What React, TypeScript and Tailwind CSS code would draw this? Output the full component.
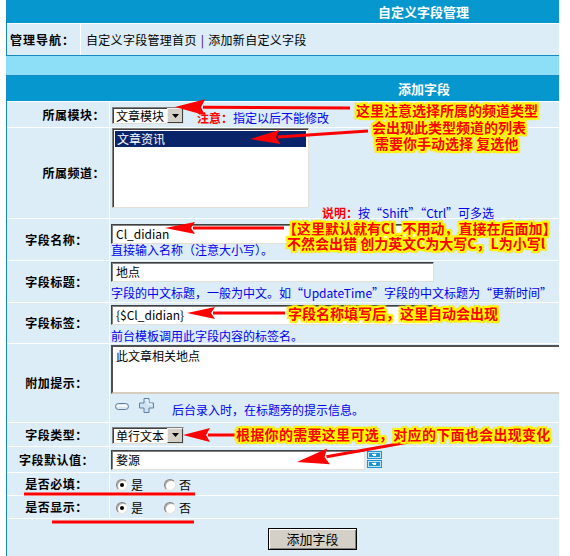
import React from "react";

const GLOW =
  "[text-shadow:1px_0_0_#ff0,-1px_0_0_#ff0,0_1px_0_#ff0,0_-1px_0_#ff0,1px_1px_0_#ff0,-1px_-1px_0_#ff0,1px_-1px_0_#ff0,-1px_1px_0_#ff0,2px_0_1px_#ff0,-2px_0_1px_#ff0,0_2px_1px_#ff0,0_-2px_1px_#ff0,2px_2px_1px_#fd0,-2px_-2px_1px_#fd0,2px_-2px_1px_#fd0,-2px_2px_1px_#fd0]";

function Sel({ text }: { text: string }) {
  return (
    <div className="w-[72px] h-[17px] flex bg-white border border-t-[#808080] border-l-[#808080] border-r-[#e0ddd6] border-b-[#e0ddd6] shadow-[inset_1px_1px_0_#404040]">
      <span className="flex-1 pl-[3px] pt-[1px] leading-[14px] text-[12px] text-black">{text}</span>
      <span className="w-[16px] h-[15px] bg-[#d4d0c8] border border-t-[#f4f2ee] border-l-[#f4f2ee] border-r-[#404040] border-b-[#404040] flex items-center justify-center">
        <svg width="7" height="4" viewBox="0 0 7 4">
          <polygon points="0,0 7,0 3.5,4" fill="#000" />
        </svg>
      </span>
    </div>
  );
}

function Radio({ on }: { on?: boolean }) {
  return (
    <span className="w-[12px] h-[12px] rounded-full bg-white border border-t-[#808080] border-l-[#808080] border-r-[#e6e3dc] border-b-[#e6e3dc] shadow-[inset_1px_1px_0_#b0aca4] flex items-center justify-center">
      {on ? <span className="w-[4px] h-[4px] rounded-full bg-black" /> : null}
    </span>
  );
}

function Label({ children, right }: { children: React.ReactNode; right?: boolean }) {
  return (
    <div
      className={
        right
          ? "w-[102px] shrink-0 bg-[#dcedf8] flex items-center justify-end pr-[4px] font-bold tracking-[0.5px]"
          : "w-[102px] shrink-0 bg-[#dcedf8] flex items-center justify-center pr-[3px] font-bold tracking-[0.5px]"
      }
    >
      {children}
    </div>
  );
}

function arrow(x1: number, y1: number, x2: number, y2: number, len: number, hw: number) {
  const dx = x2 - x1;
  const dy = y2 - y1;
  const L = Math.hypot(dx, dy);
  const ux = dx / L;
  const uy = dy / L;
  const bx = x2 - ux * len;
  const by = y2 - uy * len;
  const px = -uy;
  const py = ux;
  return (
    <g key={`${x1}-${y1}`}>
      <line x1={x1} y1={y1} x2={bx + ux * 2} y2={by + uy * 2} stroke="#f00" strokeWidth="3" />
      <polygon
        points={`${x2},${y2} ${bx + px * hw},${by + py * hw} ${bx + ux * 4},${by + uy * 4} ${bx - px * hw},${by - py * hw}`}
        fill="#f00"
      />
    </g>
  );
}

const INPUT =
  "bg-white border border-t-[#404040] border-l-[#404040] border-r-[#e4e0d8] border-b-[#e4e0d8] shadow-[inset_1px_1px_0_#808080] pl-[4px] text-[12px] leading-[18px] text-black";

export default function App() {
  return (
    <div className="relative w-[570px] h-[556px] overflow-hidden bg-white font-['Noto_Sans_CJK_SC',sans-serif] text-[12px] text-black">
      <div className="ml-[6px] w-[553px]">
        {/* table 1 */}
        <div className="border-l border-[#1589c0] bg-white flex flex-col gap-px">
          <div className="h-[23px] bg-[#0697cf] text-white font-bold text-[13px] leading-[23px] pl-[371px]">
            自定义字段管理
          </div>
          <div className="h-[31px] flex gap-px">
            <div className="w-[73px] bg-[#dcedf8] flex items-center pl-[3px] font-bold tracking-[1px]">管理导航：</div>
            <div className="flex-1 bg-[#dcedf8] flex items-center pl-[5px] tracking-[0.3px]">
              自定义字段管理首页<span className="mx-[4px] text-[#330066]">|</span>添加新自定义字段
            </div>
          </div>
        </div>
        <div className="h-px bg-[#1589c0]" />
        <div className="h-[19px] bg-[#8ddff8]" />
        <div className="h-px bg-[#1589c0]" />

        {/* table 2 */}
        <div className="border-l border-[#1589c0] bg-white flex flex-col gap-px">
          <div className="h-[25px] bg-[#0697cf] text-white font-bold text-[13px] leading-[25px] pl-[391px]">添加字段</div>

          {/* 所属模块 */}
          <div className="h-[25px] flex gap-px">
            <Label right>所属模块：</Label>
            <div className="flex-1 bg-[#dcedf8] flex items-center pl-[2px] pt-[2px]">
              <Sel text="文章模块" />
              <span className="ml-[13px] pt-[4px] text-[#f00] font-bold">注意：</span>
              <span className="pt-[4px] text-[#0000ee]">指定以后不能修改</span>
            </div>
          </div>

          {/* 所属频道 */}
          <div className="h-[90px] flex gap-px">
            <Label right>所属频道：</Label>
            <div className="flex-1 bg-[#dcedf8] flex flex-col pl-[2px]">
              <div className="w-[197px] h-[80px] bg-white border border-t-[#808080] border-l-[#808080] border-r-[#e4e0d8] border-b-[#e4e0d8] shadow-[inset_1px_1px_0_#404040] p-[2px]">
                <div className="h-[16px] bg-[#0a246a] text-white pl-[2px] leading-[16px]">文章资讯</div>
              </div>
              <div className="pl-[210px] leading-[10px] h-[10px] whitespace-nowrap">
                <span className="text-[#f00] font-bold">说明：</span>
                <span className="text-[#0000ee]">按“Shift”“Ctrl”可多选</span>
              </div>
            </div>
          </div>

          {/* 字段名称 */}
          <div className="h-[41px] flex gap-px">
            <Label>字段名称：</Label>
            <div className="flex-1 bg-[#dcedf8] flex flex-col pl-[1px] pt-[5px]">
              <div className={"w-[323px] h-[20px] " + INPUT}>Cl_didian</div>
              <div className="leading-[12px] text-[#0000ee]">直接输入名称（注意大小写）。</div>
            </div>
          </div>

          {/* 字段标题 */}
          <div className="h-[41px] flex gap-px">
            <Label>字段标题：</Label>
            <div className="flex-1 bg-[#dcedf8] flex flex-col pl-[1px] pt-[1px]">
              <div className={"w-[323px] h-[20px] " + INPUT}>地点</div>
              <div className="mt-[4px] leading-[14px] text-[#0000ee] whitespace-nowrap">
                字段的中文标题，一般为中文。如“UpdateTime”字段的中文标题为“更新时间”
              </div>
            </div>
          </div>

          {/* 字段标签 */}
          <div className="h-[40px] flex gap-px">
            <Label>字段标签：</Label>
            <div className="flex-1 bg-[#dcedf8] flex flex-col pl-[1px] pt-[2px]">
              <div className={"w-[323px] h-[20px] " + INPUT}>{"{$Cl_didian}"}</div>
              <div className="mt-[4px] leading-[14px] text-[#0000ee]">前台模板调用此字段内容的标签名。</div>
            </div>
          </div>

          {/* 附加提示 */}
          <div className="h-[78px] flex gap-px">
            <Label>附加提示：</Label>
            <div className="flex-1 bg-[#dcedf8] flex flex-col pl-[1px] pt-[1px] overflow-hidden">
              <div className="w-[470px] h-[49px] shrink-0 bg-white border-2 border-t-[#505050] border-l-[#505050] border-r-[#d8ccbc] border-b-[#d8ccbc] pl-[3px] pt-[1px] leading-[16px]">
                此文章相关地点
              </div>
              <div className="flex items-center mt-[5px] h-[16px]">
                <svg width="14" height="8" viewBox="0 0 14 8" className="ml-[4px]">
                  <rect x="0.5" y="0.5" width="13" height="6" rx="3" fill="#dfe8f0" stroke="#5f7c9c" />
                  <rect x="2" y="2" width="10" height="1.5" fill="#ffffff" />
                </svg>
                <svg width="15" height="15" viewBox="0 0 15 15" className="ml-[10px] mt-[-4px]">
                  <path
                    d="M5 0.5 H10 V5 H14.5 V10 H10 V14.5 H5 V10 H0.5 V5 H5 Z"
                    fill="#cfe2f3"
                    stroke="#5c80a8"
                    strokeLinejoin="round"
                  />
                  <path d="M6 2 H9 V6 H13" fill="none" stroke="#ffffff" strokeWidth="1" />
                </svg>
                <span className="ml-[18px] mt-[6px] text-[#0000ee]">后台录入时，在标题旁的提示信息。</span>
              </div>
            </div>
          </div>

          {/* 字段类型 */}
          <div className="h-[23px] flex gap-px">
            <Label>字段类型：</Label>
            <div className="flex-1 bg-[#dcedf8] flex items-center pl-[2px] pt-[1px]">
              <Sel text="单行文本" />
            </div>
          </div>

          {/* 字段默认值 */}
          <div className="h-[25px] flex gap-px">
            <Label>字段默认值：</Label>
            <div className="flex-1 bg-[#dcedf8] flex items-center pl-[1px]">
              <div className={"w-[254px] h-[20px] " + INPUT}>婺源</div>
              <div className="ml-[2px] flex flex-col gap-px">
                {[0, 1].map((i) => (
                  <svg key={i} width="15" height="8" viewBox="0 0 15 8">
                    <rect x="0" y="0" width="15" height="8" fill="#1e93cf" />
                    <rect x="1.5" y="1.5" width="12" height="5" fill="none" stroke="#bfe6f8" strokeWidth="1" />
                    <path d="M5 3.5 H9 L8 2.5 M9 4.5 H6" stroke="#ffffff" strokeWidth="1" fill="none" />
                  </svg>
                ))}
              </div>
            </div>
          </div>

          {/* 是否必填 */}
          <div className="h-[22px] flex gap-px">
            <Label>是否必填：</Label>
            <div className="flex-1 bg-[#dcedf8] flex items-center pl-[6px] pt-[1px]">
              <Radio on />
              <span className="ml-[3px]">是</span>
              <span className="ml-[21px]">
                <Radio />
              </span>
              <span className="ml-[3px]">否</span>
            </div>
          </div>

          {/* 是否显示 */}
          <div className="h-[22px] flex gap-px">
            <Label>是否显示：</Label>
            <div className="flex-1 bg-[#dcedf8] flex items-center pl-[6px] pt-[1px]">
              <Radio on />
              <span className="ml-[3px]">是</span>
              <span className="ml-[21px]">
                <Radio />
              </span>
              <span className="ml-[3px]">否</span>
            </div>
          </div>

          {/* submit */}
          <div className="h-[40px] flex">
            <div className="flex-1 bg-[#dcedf8] pt-[9px] pl-[261px]">
              <div className="w-[89px] h-[22px] bg-[#d4d0c8] border border-black shadow-[inset_1px_1px_0_#ffffff,inset_-1px_-1px_0_#808080] flex items-center justify-center text-[13px]">
                添加字段
              </div>
            </div>
          </div>
        </div>
      </div>

      {/* arrows & underlines */}
      <svg className="absolute left-0 top-0 pointer-events-none" width="570" height="556" viewBox="0 0 570 556">
        {arrow(350, 108, 175, 107, 30, 8)}
        {arrow(368, 131, 250, 139, 30, 7)}
        {arrow(284, 228, 165, 228, 30, 6)}
        {arrow(285, 313, 187, 313, 28, 6)}
        {arrow(235, 435, 183, 435, 27, 7)}
        {arrow(437, 437, 297, 462, 32, 8)}
        <line x1="24" y1="494" x2="195" y2="494" stroke="#f00" strokeWidth="3" />
        <line x1="52" y1="522" x2="194" y2="522" stroke="#f00" strokeWidth="3" />
      </svg>

      {/* annotations */}
      <div className={"absolute left-[356px] top-[102px] text-[14px] leading-[16px] font-bold text-[#f00] whitespace-nowrap " + GLOW}>
        这里注意选择所属的频道类型
      </div>
      <div className={"absolute left-[372px] top-[119px] text-[14px] leading-[16px] font-bold text-[#f00] whitespace-nowrap " + GLOW}>
        会出现此类型频道的列表
      </div>
      <div className={"absolute left-[375px] top-[135px] text-[14px] leading-[16px] font-bold text-[#f00] whitespace-nowrap " + GLOW}>
        需要你手动选择 复选他
      </div>
      <div className={"absolute left-[283px] top-[220px] text-[14px] leading-[16px] font-bold text-[#f00] whitespace-nowrap " + GLOW}>
        【这里默认就有Cl_不用动，直接在后面加】
      </div>
      <div className={"absolute left-[287px] top-[235px] text-[14px] leading-[16px] font-bold text-[#f00] whitespace-nowrap " + GLOW}>
        不然会出错 创力英文C为大写C，L为小写l
      </div>
      <div className={"absolute left-[288px] top-[305px] text-[14px] leading-[16px] font-bold text-[#f00] whitespace-nowrap " + GLOW}>
        字段名称填写后，这里自动会出现
      </div>
      <div className={"absolute left-[236px] top-[426px] text-[14px] leading-[16px] font-bold text-[#f00] whitespace-nowrap tracking-[0.3px] " + GLOW}>
        根据你的需要这里可选，对应的下面也会出现变化
      </div>
    </div>
  );
}
